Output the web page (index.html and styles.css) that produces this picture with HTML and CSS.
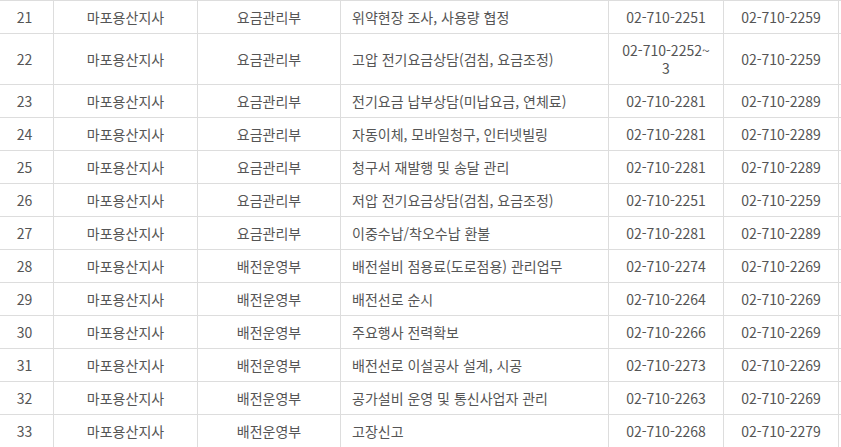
FILE: index.html
```html
<!DOCTYPE html>
<html lang="ko">
<head>
<meta charset="utf-8">
<title>마포용산지사 연락처</title>
<link rel="stylesheet" href="styles.css">
</head>
<body>
<div class="table" role="table">
  <div class="row" role="row"><div class="cell num">21</div><div class="cell">마포용산지사</div><div class="cell">요금관리부</div><div class="cell task">위약현장 조사, 사용량 협정</div><div class="cell phone">02-710-2251</div><div class="cell phone">02-710-2259</div><div class="cell extra"></div></div>
  <div class="row" role="row"><div class="cell num">22</div><div class="cell">마포용산지사</div><div class="cell">요금관리부</div><div class="cell task">고압 전기요금상담(검침, 요금조정)</div><div class="cell phone">02-710-2252~3</div><div class="cell phone">02-710-2259</div><div class="cell extra"></div></div>
  <div class="row" role="row"><div class="cell num">23</div><div class="cell">마포용산지사</div><div class="cell">요금관리부</div><div class="cell task">전기요금 납부상담(미납요금, 연체료)</div><div class="cell phone">02-710-2281</div><div class="cell phone">02-710-2289</div><div class="cell extra"></div></div>
  <div class="row" role="row"><div class="cell num">24</div><div class="cell">마포용산지사</div><div class="cell">요금관리부</div><div class="cell task">자동이체, 모바일청구, 인터넷빌링</div><div class="cell phone">02-710-2281</div><div class="cell phone">02-710-2289</div><div class="cell extra"></div></div>
  <div class="row" role="row"><div class="cell num">25</div><div class="cell">마포용산지사</div><div class="cell">요금관리부</div><div class="cell task">청구서 재발행 및 송달 관리</div><div class="cell phone">02-710-2281</div><div class="cell phone">02-710-2289</div><div class="cell extra"></div></div>
  <div class="row" role="row"><div class="cell num">26</div><div class="cell">마포용산지사</div><div class="cell">요금관리부</div><div class="cell task">저압 전기요금상담(검침, 요금조정)</div><div class="cell phone">02-710-2251</div><div class="cell phone">02-710-2259</div><div class="cell extra"></div></div>
  <div class="row" role="row"><div class="cell num">27</div><div class="cell">마포용산지사</div><div class="cell">요금관리부</div><div class="cell task">이중수납/착오수납 환불</div><div class="cell phone">02-710-2281</div><div class="cell phone">02-710-2289</div><div class="cell extra"></div></div>
  <div class="row" role="row"><div class="cell num">28</div><div class="cell">마포용산지사</div><div class="cell">배전운영부</div><div class="cell task">배전설비 점용료(도로점용) 관리업무</div><div class="cell phone">02-710-2274</div><div class="cell phone">02-710-2269</div><div class="cell extra"></div></div>
  <div class="row" role="row"><div class="cell num">29</div><div class="cell">마포용산지사</div><div class="cell">배전운영부</div><div class="cell task">배전선로 순시</div><div class="cell phone">02-710-2264</div><div class="cell phone">02-710-2269</div><div class="cell extra"></div></div>
  <div class="row" role="row"><div class="cell num">30</div><div class="cell">마포용산지사</div><div class="cell">배전운영부</div><div class="cell task">주요행사 전력확보</div><div class="cell phone">02-710-2266</div><div class="cell phone">02-710-2269</div><div class="cell extra"></div></div>
  <div class="row" role="row"><div class="cell num">31</div><div class="cell">마포용산지사</div><div class="cell">배전운영부</div><div class="cell task">배전선로 이설공사 설계, 시공</div><div class="cell phone">02-710-2273</div><div class="cell phone">02-710-2269</div><div class="cell extra"></div></div>
  <div class="row" role="row"><div class="cell num">32</div><div class="cell">마포용산지사</div><div class="cell">배전운영부</div><div class="cell task">공가설비 운영 및 통신사업자 관리</div><div class="cell phone">02-710-2263</div><div class="cell phone">02-710-2269</div><div class="cell extra"></div></div>
  <div class="row" role="row"><div class="cell num">33</div><div class="cell">마포용산지사</div><div class="cell">배전운영부</div><div class="cell task">고장신고</div><div class="cell phone">02-710-2268</div><div class="cell phone">02-710-2279</div><div class="cell extra"></div></div>
</div>
</body>
</html>
```
FILE: styles.css
```css
html, body {
  margin: 0;
  padding: 0;
  background: #fff;
}
body {
  font-family: "Noto Sans CJK KR", "Noto Sans", sans-serif;
  font-size: 14px;
  color: #555;
}
.table {
  display: grid;
  grid-template-columns: 54px 144px 143px 268px 115px 115px 2px;
  width: 841px;
  border-top: 1px solid #ddd;
}
.row {
  display: contents;
}
.cell {
  box-sizing: border-box;
  min-height: 33px;
  padding: 7px 10px;
  line-height: 18px;
  border-right: 1px solid #ddd;
  border-bottom: 1px solid #ddd;
  display: flex;
  align-items: center;
  justify-content: center;
  text-align: center;
}
.cell.num {
  padding-left: 6px;
  padding-right: 10px;
}
.cell.task {
  justify-content: flex-start;
  text-align: left;
  padding-left: 11px;
}
.cell.phone {
  word-break: break-all;
}
.cell.extra {
  padding: 0;
  border-right: 0;
}
```
